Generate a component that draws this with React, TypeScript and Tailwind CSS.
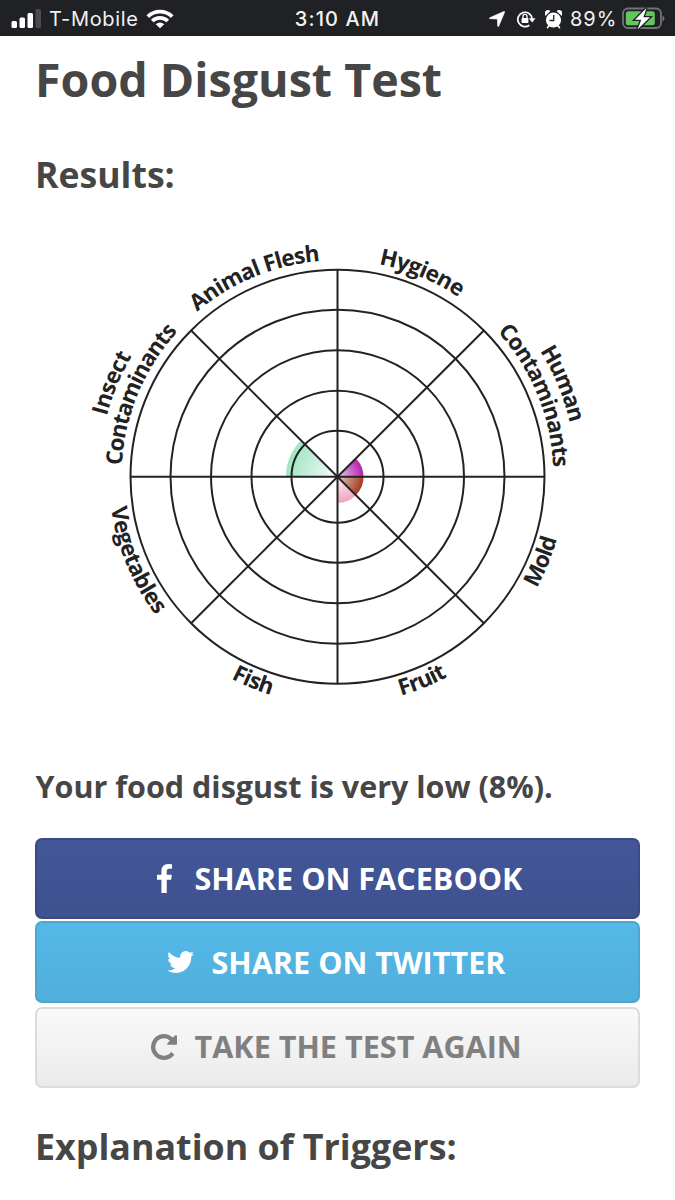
import React from "react";

const CX = 337.5;
const CY = 246.8;

function point(radius: number, deg: number) {
  const a = (deg * Math.PI) / 180;
  return { x: CX + radius * Math.sin(a), y: CY - radius * Math.cos(a) };
}

function arc(radius: number, from: number, to: number) {
  const a = point(radius, from);
  const b = point(radius, to);
  return `M${a.x} ${a.y}A${radius} ${radius} 0 0 ${to > from ? 1 : 0} ${b.x} ${b.y}`;
}

function wedge(radius: number, from: number, to: number) {
  const a = point(radius, from);
  const b = point(radius, to);
  return `M${CX} ${CY}L${a.x} ${a.y}A${radius} ${radius} 0 0 1 ${b.x} ${b.y}Z`;
}

const labels = [
  { id: "flesh", text: "Animal Flesh", r: 216.500, from: -40.4, to: -4.6 },
  { id: "hygiene", text: "Hygiene", r: 216.500, from: 11, to: 34 },
  { id: "human", text: "Human", r: 238.5, from: 58.1, to: 77 },
  { id: "humanc", text: "Contaminants", r: 216, from: 47.8, to: 87.5 },
  { id: "insectc", text: "Contaminants", r: 216, from: -87, to: -47.7 },
  { id: "insect", text: "Insect", r: 238.5, from: -75.3, to: -59.6 },
  { id: "veg", text: "Vegetables", r: 228.5, from: 262.2, to: 232.7 },
  { id: "fish", text: "Fish", r: 228, from: 207.8, to: 197 },
  { id: "fruit", text: "Fruit", r: 228, from: 163.8, to: 151.2 },
  { id: "mold", text: "Mold", r: 228, from: 119.2, to: 105.8 },
];

const wedges = [
  { id: "green", r: 51.5, from: 270, to: 315, inner: "#eefaf4", outer: "#9fe5c2" },
  { id: "purple", r: 26, from: 45, to: 90, inner: "#e3c3e4", outer: "#b41fb0" },
  { id: "brown", r: 26, from: 90, to: 135, inner: "#d9c0b8", outer: "#a8381f" },
  { id: "pink", r: 26, from: 135, to: 180, inner: "#fbeaf0", outer: "#f2a3c1" },
];

function Wheel() {
  return (
    <svg className="block h-[480px] w-full" viewBox="0 0 675 480">
      <defs>
        {wedges.map((w) => (
          <radialGradient key={w.id} id={w.id} gradientUnits="userSpaceOnUse" cx={CX} cy={CY} r={w.r}>
            <stop offset="0.1" stopColor={w.inner} />
            <stop offset="1" stopColor={w.outer} />
          </radialGradient>
        ))}
        {labels.map((l) => (
          <path key={l.id} id={`arc-${l.id}`} d={arc(l.r, l.from, l.to + (l.to > l.from ? 3 : -3))} />
        ))}
      </defs>
      {wedges.map((w) => (
        <path key={w.id} d={wedge(w.r, w.from, w.to)} fill={`url(#${w.id})`} />
      ))}
      <g fill="none" stroke="#222" strokeWidth="2">
        {[46, 86, 126.5, 167, 207].map((r) => (
          <circle key={r} cx={CX} cy={CY} r={r} />
        ))}
        {[0, 45, 90, 135].map((deg) => {
          const a = point(207, deg);
          const b = point(207, deg + 180);
          return <line key={deg} x1={a.x} y1={a.y} x2={b.x} y2={b.y} />;
        })}
      </g>
      {labels.map((l) => {
        const length = (Math.abs(l.to - l.from) * Math.PI * l.r) / 180;
        return (
          <text key={l.id} className="fill-[#222] text-[22.5px] font-bold" textLength={length}>
            <textPath href={`#arc-${l.id}`} textLength={length}>
              {l.text}
            </textPath>
          </text>
        );
      })}
    </svg>
  );
}

function StatusBar() {
  return (
    <div className="grid h-9 grid-cols-[1fr_auto_1fr] items-center bg-[#202125] pt-px font-['Inter','Liberation_Sans',sans-serif] text-[20px] leading-[35px] text-[#f2f2f2]">
      <div className="flex items-center pl-[11px]">
        <svg className="mr-[8px] h-5 w-[30px]" viewBox="0 0 30 20" fill="#fff">
          <rect x="0.5" y="12" width="5.5" height="7" rx="1.5" />
          <rect x="8.5" y="8.5" width="5.5" height="10.5" rx="1.5" />
          <rect x="16.5" y="4" width="5.5" height="15" rx="1.5" />
          <rect x="24.5" y="0" width="5.5" height="19" rx="1.5" fill="#4b4b4f" />
        </svg>
        <span className="w-[89px] pt-px whitespace-nowrap tracking-[0.65px]">T-Mobile</span>
        <svg className="ml-[8px] h-5 w-7" viewBox="0 0 28 20">
          <g fill="none" stroke="#fff" strokeWidth="3.8">
            <path d="M1.8 7.6a17.4 17.4 0 0 1 24.4 0" />
            <path d="M6.2 12a11.2 11.2 0 0 1 15.6 0" />
          </g>
          <path d="M14 19.3l4.2-4.1a6 6 0 0 0-8.4 0z" fill="#fff" />
        </svg>
      </div>
      <span className="pt-px font-medium tracking-[1.1px]">3:10 AM</span>
      <div className="flex items-center justify-end pr-[10px]">
        <svg className="h-4 w-4" viewBox="0 0 16 16" fill="#fff">
          <path d="M14.700.6Q16 .1 15.500 1.400L9.700 15.200q-.7 1.200-1-.2L8.400 8 1 7.700q-1.500-.3-.2-1z" stroke="#fff" strokeWidth=".6" />
        </svg>
        <svg className="ml-[11px] h-[18px] w-5" viewBox="0 0 20 18">
          <path d="M13.300 15.300A7.200 7.200 0 1 1 16.200 8.600" fill="none" stroke="#fff" strokeWidth="1.700" />
          <path d="M12.800 8.200h6.700l-3.300 4.300z" fill="#fff" />
          <rect x="5.600" y="8" width="6.800" height="5" rx=".7" fill="#fff" />
          <path d="M7 8V6.400a2 2 0 0 1 4 0V8" fill="none" stroke="#fff" strokeWidth="1.300" />
        </svg>
        <svg className="ml-[9px] h-[19px] w-[17px]" viewBox="0 0 17 19">
          <path d="M2.600 17.500l2-2.500M14.400 17.500l-2-2.500" stroke="#fff" strokeWidth="1.800" strokeLinecap="round" />
          <circle cx="8.500" cy="10" r="7.600" fill="#fff" />
          <path d="M.5 5.800A3 3 0 0 1 5.300 1.200zM16.500 5.800A3 3 0 0 0 11.700 1.200z" fill="#fff" />
          <path d="M8.700 5v5.500H4.500" fill="none" stroke="#202125" strokeWidth="1.300" />
        </svg>
        <span className="ml-[8px] w-[48px] pt-px whitespace-nowrap tracking-[1px]">89%</span>
        <svg className="ml-1 h-6 w-[43px]" viewBox="0 0 43 24">
          <rect x="1" y="1.500" width="38" height="19.500" rx="5" fill="none" stroke="#727376" strokeWidth="1.800" />
          <rect x="3.800" y="4.300" width="29" height="14" rx="2.500" fill="#5fc75d" />
          <path d="M40.500 8.500v6q2-1 2-3t-2-3z" fill="#727376" />
          <path d="M24.500 1L13 12.700h6.300L15.500 22.500 28 10.200h-6.600z" fill="#fff" stroke="#202125" strokeWidth="2.600" paintOrder="stroke" />
        </svg>
      </div>
    </div>
  );
}

export default function App() {
  return (
    <div className="h-[1200px] w-[675px] overflow-hidden bg-white font-['Open_Sans','Noto_Sans',sans-serif] text-[#464646]">
      <StatusBar />
      <main>
        <h1 className="h-[86px] pl-[35px] text-[46.6px] leading-[86px] font-bold whitespace-nowrap">Food Disgust Test</h1>
        <h2 className="mt-[22px] h-[60px] pl-[35px] text-[35.6px] leading-[60px] font-bold">Results:</h2>
        <div className="mt-[26px]">
          <Wheel />
        </div>
        <h3 className="mt-[46px] h-[60px] pl-[35.5px] text-[30.5px] leading-[60px] font-bold whitespace-nowrap">
          Your food disgust is very low (8%).
        </h3>
        <div className="mx-[35px] mt-[22px] flex flex-col text-[30.6px] font-bold whitespace-nowrap text-white">
          <button className="flex h-[81px] items-center rounded-[7px] border-2 border-[#3a4a85] bg-linear-to-b from-[#425699] to-[#3f518e] pl-[120px]">
            <svg className="h-[29px] w-[15px]" viewBox="479 0 864 1664" fill="currentColor">
              <path d="M1343 12v264h-157q-86 0-116 36t-30 108v189h293l-39 296h-254v759h-306v-759h-255v-296h255v-218q0-186 104-288.5t277-102.5q147 0 228 12z" />
            </svg>
            <span className="ml-[22.5px]">SHARE ON FACEBOOK</span>
          </button>
          <button className="mt-[2px] flex h-[82px] items-center rounded-[7px] border-2 border-[#4ca6d0] bg-linear-to-b from-[#54b9e8] to-[#50aedb] pl-[130px]">
            <svg className="h-[22px] w-[27px]" viewBox="108 256 1576 1280" fill="currentColor">
              <path d="M1684 408q-67 98-162 167 1 14 1 42 0 130-38 259.5t-115.5 248.5-184.5 210.5-258 146-323 54.5q-271 0-496-145 35 4 78 4 225 0 401-138-105-2-188-64.5t-114-159.5q33 5 61 5 43 0 85-11-112-23-185.500-111.500t-73.500-205.500v-4q68 38 146 41-66-44-105-115t-39-154q0-88 44-163 121 149 294.500 238.500t371.500 99.500q-8-38-8-74 0-134 94.500-228.500t228.500-94.500q140 0 236 102 109-21 205-78-37 115-142 178 93-10 186-50z" />
            </svg>
            <span className="ml-[17.5px] pt-[2px]">SHARE ON TWITTER</span>
          </button>
          <button className="mt-1 flex h-[81px] items-center rounded-[7px] border-2 border-[#dcdcdc] bg-linear-to-b from-[#f9f9f9] to-[#ebebeb] pb-px pl-[114px] text-[#808080]">
            <svg className="h-[26px] w-[26px]" viewBox="0 128 1536 1536" fill="currentColor">
              <path d="M1536 256v448q0 26-19 45t-45 19h-448q-42 0-59-40-17-39 14-69l138-138q-148-137-349-137-104 0-198.5 40.5t-163.5 109.5-109.5 163.5-40.5 198.5 40.5 198.5 109.5 163.5 163.5 109.5 198.5 40.5q119 0 225-52t179-147q7-10 23-12 15 0 25 9l137 138q9 8 9.5 20.5t-7.5 22.5q-109 132-264 204.5t-327 72.5q-156 0-298-61t-245-164-164-245-61-298 61-298 164-245 245-164 298-61q147 0 284.5 55.5t244.5 156.5l130-129q29-31 70-14 39 17 39 59z" />
            </svg>
            <span className="ml-[17.5px]">TAKE THE TEST AGAIN</span>
          </button>
        </div>
        <h2 className="mt-[28px] h-[60px] pl-[35px] text-[35.8px] leading-[60px] font-bold whitespace-nowrap">Explanation of Triggers:</h2>
      </main>
    </div>
  );
}
